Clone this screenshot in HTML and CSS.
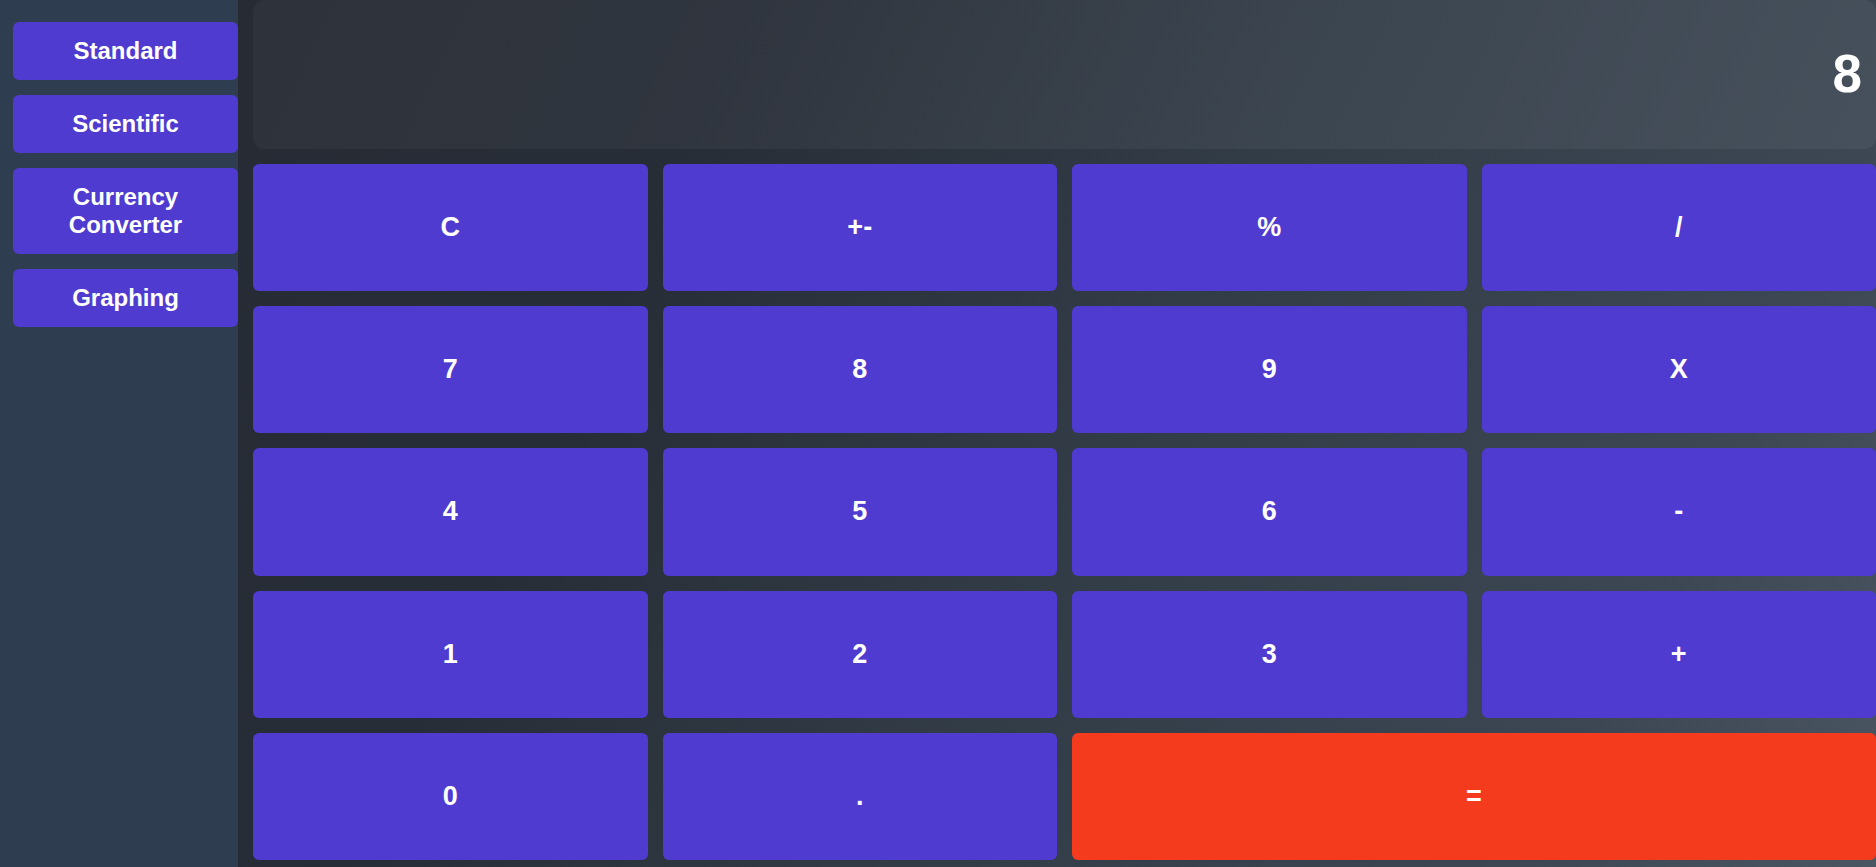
FILE: index.html
```html
<!DOCTYPE html>
<html lang="en">
<head>
<meta charset="utf-8">
<title>Calculator</title>
<link rel="stylesheet" href="styles.css">
</head>
<body>
<div class="app">
  <nav class="sidebar">
    <button class="mode-btn">Standard</button>
    <button class="mode-btn">Scientific</button>
    <button class="mode-btn">Currency Converter</button>
    <button class="mode-btn">Graphing</button>
  </nav>
  <main class="calc">
    <div class="display">8</div>
    <div class="keypad">
      <button class="key">C</button>
      <button class="key">+-</button>
      <button class="key">%</button>
      <button class="key">/</button>
      <button class="key">7</button>
      <button class="key">8</button>
      <button class="key">9</button>
      <button class="key">X</button>
      <button class="key">4</button>
      <button class="key">5</button>
      <button class="key">6</button>
      <button class="key">-</button>
      <button class="key">1</button>
      <button class="key">2</button>
      <button class="key">3</button>
      <button class="key">+</button>
      <button class="key">0</button>
      <button class="key">.</button>
      <button class="key key-equals">=</button>
    </div>
  </main>
</div>
</body>
</html>
```
FILE: styles.css
```css
* { box-sizing: border-box; }
html, body {
  margin: 0;
  padding: 0;
  height: 100%;
  overflow: hidden;
}
body {
  font-family: "Liberation Sans", Arial, sans-serif;
  color: #ffffff;
}
.app {
  display: flex;
  height: 867px;
}
.sidebar {
  width: 238px;
  flex: 0 0 238px;
  background: #2e3e50;
  display: flex;
  flex-direction: column;
  gap: 15px;
  padding: 22px 0 0 13px;
}
.mode-btn {
  font-family: inherit;
  font-size: 24px;
  font-weight: 700;
  line-height: normal;
  color: #ffffff;
  background: #4f3bcf;
  border: none;
  border-radius: 6px;
  padding: 15px 10px;
  text-align: center;
  width: 100%;
}
.calc {
  flex: 1;
  display: flex;
  flex-direction: column;
  gap: 15px;
  padding: 0 0 7px 15px;
  background: linear-gradient(115deg, #262b34 0%, #272d36 25%, #323c47 53%, #3c4753 83%, #4b5663 100%);
}
.display {
  height: 149px;
  flex: 0 0 149px;
  border-radius: 12px;
  background: linear-gradient(115deg, rgba(255,255,255,0.035), rgba(255,255,255,0.05));
  display: flex;
  align-items: center;
  justify-content: flex-end;
  padding: 0 14px 2px;
  font-size: 53px;
  font-weight: 700;
}
.keypad {
  flex: 1;
  display: grid;
  grid-template-columns: repeat(4, 1fr);
  grid-template-rows: repeat(5, 1fr);
  gap: 15px;
}
.key {
  font-family: inherit;
  font-size: 27px;
  font-weight: 700;
  color: #ffffff;
  background: #4f3bcf;
  border: none;
  border-radius: 6px;
  padding: 0;
}
.key-equals {
  grid-column: span 2;
  background: #f53b1e;
}
```
